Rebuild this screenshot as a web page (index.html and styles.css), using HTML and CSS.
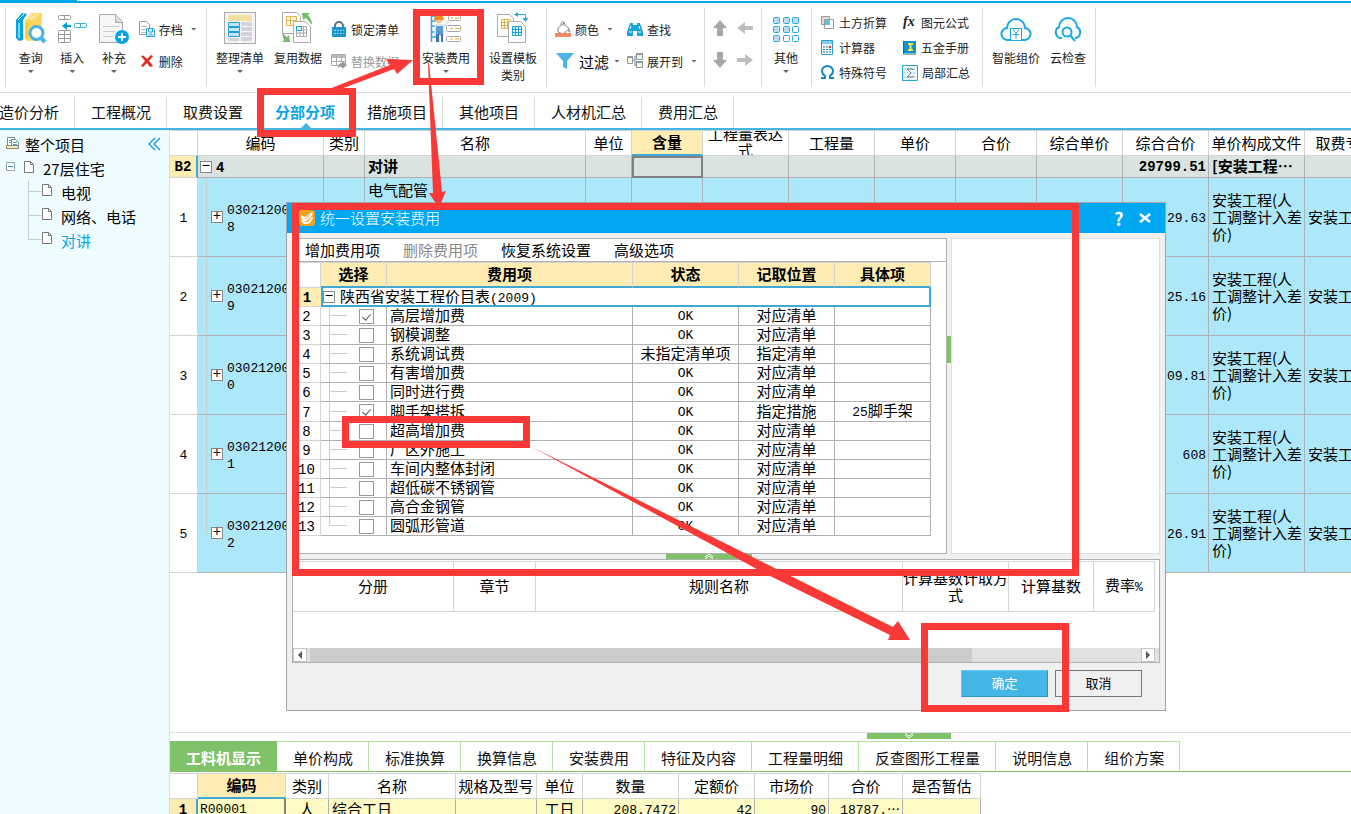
FILE: index.html
```html
<!DOCTYPE html>
<html lang="zh-CN">
<head>
<meta charset="utf-8">
<title>统一设置安装费用</title>
<link rel="stylesheet" href="styles.css">
</head>
<body>
<div class="app">
  <header class="topline"><span class="topline-tab"></span></header>

  <div class="ribbon">
    <div class="group g-edit">
      <button class="big w42"><svg width="32" height="32" viewBox="0 0 32 32"><path d="M1 8l6-7 5 1-4 6v20l-4 1-3-3z" fill="#00a3e4"/><path d="M3 8l6-6M4 11v15" stroke="#fff" fill="none"/><path d="M10 8l6-7h11l-1 27-14 1-2-3z" fill="#ffd75e"/><path d="M12 8l5-6M15 8l5-6M18 8l5-6" stroke="#fff" fill="none"/><path d="M12 10v17" stroke="#e9b93c"/><circle cx="21.500" cy="21" r="6.500" fill="#fff" stroke="#4ab4e6" stroke-width="3"/><path d="M26 26l4 4" stroke="#4ab4e6" stroke-width="4"/></svg><span>查询</span><i class="caret"></i></button>
      <button class="big w42"><svg width="32" height="32" viewBox="0 0 32 32"><g fill="#fff" stroke="#999"><rect x="2.500" y="3.500" width="12" height="4" rx="1"/><path d="M8.500 3v5"/><rect x="2.500" y="18.500" width="12" height="12" rx="1"/><path d="M2 22.500h13M2 26.500h13M8.500 18v13"/></g><path d="M6 14l5-4v3h4v2h-4v3z" fill="#009fdb"/><rect x="18.500" y="11.500" width="12" height="4" rx="1" fill="#fff" stroke="#3bb1e0"/><path d="M24.500 11v5" stroke="#3bb1e0"/></svg><span>插入</span><i class="caret"></i></button>
      <button class="big w42"><svg width="32" height="32" viewBox="0 0 32 32"><path d="M1.500 2.500h16l7 7v21h-23z" fill="#f6f6f6" stroke="#a8a8a8"/><path d="M17.500 2.500v8h7" fill="#ddd" stroke="#a8a8a8"/><path d="M5 14.500h16M5 19.500h12M5 24.500h10" stroke="#ccc"/><circle cx="24" cy="25" r="7" fill="#00a3e8"/><path d="M24 21v8M20 25h8" stroke="#fff" stroke-width="2"/></svg><span>补充</span><i class="caret"></i></button>
      <div class="col2">
        <button class="small"><svg width="16" height="16" viewBox="0 0 16 16"><path d="M.5 .5h7l3 3v10h-10z" fill="#fff" stroke="#999"/><path d="M2 5.500h6M2 8.500h5M2 11.500h5" stroke="#bbb"/><path d="M7.500 7.500h7l1 1v7h-8z" fill="#fff" stroke="#2da3d6"/><path d="M9.500 8v3h4V8M10 15v-2h3v2" stroke="#2da3d6" fill="none"/></svg><span>存档</span><i class="caret"></i></button>
        <button class="small"><svg width="16" height="16" viewBox="0 0 16 16"><path d="M2 3q2-1 3 0l3 3 4-4 2 1-4 5 4 5-3 1-3-4-4 4-2-1 4-5z" fill="#e02a1c"/></svg><span>删除</span></button>
      </div>
    </div>
    <div class="group g-data">
      <button class="big w58"><svg width="32" height="32" viewBox="0 0 32 32"><rect x=".5" y=".5" width="31" height="31" fill="#f4f4f4" stroke="#aaa"/><path d="M4 3h24v6H4z" fill="#f3dfa2"/><g fill="#c8e6f4" stroke="#1ba0d4"><path d="M4.500 10.500h11v4h-11zM4.500 15.500h11v4h-11zM4.500 20.500h11v4h-11z"/></g><path d="M17 10h11v4H17zM17 15h11v4H17zM17 20h11v4H17zM4 26h11v3H4zM17 25h11v4H17z" fill="#d3d3da"/></svg><span>整理清单</span><i class="caret"></i></button>
      <button class="big w58"><svg width="32" height="32" viewBox="0 0 32 32"><path d="M.5 .5h14l4 4v17H.5z" fill="#fff" stroke="#aaa"/><path d="M4.500 4.500h10v9h-10zM4.500 8.500h10M8.500 4v9" stroke="#e5b24c" fill="#fffbe8"/><path d="M11.500 9.500h12l5 5v16h-17z" fill="#fff" stroke="#aaa"/><path d="M14.500 14.500h10v10h-10zM14 18h11M14 21h11M18 14v11M21.500 14v11" stroke="#aaa" fill="none"/><path d="M14.500 14.500h5v4h-5z" fill="#e5f6fd" stroke="#12a2dd"/><path d="M20 1h8l-2 2q4 4 4 10-4-5-6-7l-3 2zM0 18q1 5 5 7l2-2 1 7H0l2-2q-2-4-2-10z" fill="#7ab970"/></svg><span>复用数据</span></button>
      <div class="col2">
        <button class="small"><svg width="16" height="16" viewBox="0 0 16 16"><path d="M4 7V5a4 4 0 0 1 8 0v2" fill="none" stroke="#54768c" stroke-width="2"/><rect x="1" y="6" width="14" height="10" fill="#1c96cf"/><path d="M3 9.500h10M3 12.500h10" stroke="#9bd5ef" stroke-dasharray="2 1"/></svg><span>锁定清单</span></button>
        <button class="small off"><svg width="16" height="16" viewBox="0 0 16 16"><path d="M.5 1.500h14v11h-14z" fill="#fff" stroke="#aaa"/><path d="M1 2h14v3H1z" fill="#bbb"/><path d="M1 8.500h14M5.500 2v11M10.500 2v7" stroke="#aaa"/><path d="M7 15q0-5 4-5V8l5 4-5 4v-2q-2-1-4 1z" fill="#999"/></svg><span>替换数据</span></button>
      </div>
      <button class="big w58 mid"><svg width="32" height="32" viewBox="0 0 32 32"><path d="M2 4h6M2 9h6M2 14h6M2 20h6M2 25h6M1.500 2v28M8.500 20v10" stroke="#2ca9df" stroke-width="1.500"/><g fill="#fff" stroke="#aaa"><rect x="18.500" y="3.500" width="12" height="5" rx="1"/><rect x="16.500" y="13.500" width="14" height="6" rx="1"/><rect x="16.500" y="24.500" width="14" height="5" rx="1"/></g><path d="M20 6h3m2 0h4M20 16.500h3m2 0h4M20 27h3m2 0h4" stroke="#f0a830"/><circle cx="9" cy="8" r="3.500" fill="#f5c499"/><path d="M4 8q0-5 5-5t5 5z" fill="#f48b1d"/><path d="M5 12h9l4-4 1 2-5 6v8H4z" fill="#dfe6ee"/><path d="M6 14h7v9H6z" fill="#5c9bd4"/><path d="M6 22h3v8H6zM11 22h2v8h-2z" fill="#3f74ad"/></svg><span>安装费用</span><i class="caret"></i></button>
    </div>
    <div class="group g-tpl">
      <button class="big w58"><svg width="32" height="32" viewBox="0 0 32 32"><path d="M.5 2.500h12l4 4v18H.5z" fill="#fff" stroke="#aaa"/><path d="M4.500 7.500h9v9h-9zM4.500 10.500h9M4.500 13.500h9M7.500 7v9M10.500 7v9" stroke="#e5b24c" fill="#fffbe8"/><path d="M11.500 9.500h12l5 5v16h-17z" fill="#fff" stroke="#aaa"/><path d="M15.500 14.500h9v9h-9zM15 17.500h10M15 20.500h10M18.500 14v10M21.500 14v10" stroke="#12a2dd" fill="#e5f6fd"/><path d="M20 2.500h8.500v5" stroke="#2fa7d8" fill="none"/><path d="M21 0l-4 2.500L21 5zM25.500 6h6l-3 4z" fill="#2fa7d8"/></svg><span>设置模板<br>类别</span></button>
    </div>
    <div class="group g-find">
      <div class="col2">
        <button class="small"><svg width="16" height="16" viewBox="0 0 16 16"><path d="M3 7l6-5 5 6-6 5-5-2z" fill="#fff" stroke="#888"/><path d="M6 4q0-4 3-3v4" fill="none" stroke="#888"/><path d="M13 6q3 3 2 6-2-1-2-3z" fill="#999"/><path d="M0 12h16v4H0z" fill="#f38a62"/></svg><span>颜色</span><i class="caret"></i></button>
        <button class="small large"><svg width="20" height="18" viewBox="0 0 20 18"><path d="M1 1h18l-7 8v8l-4-2V9z" fill="#4ab4e6"/></svg><span>过滤</span><i class="caret"></i></button>
      </div>
      <div class="col2">
        <button class="small"><svg width="16" height="16" viewBox="0 0 16 16"><path d="M3 2h3v2h4V2h3l3 9v4h-6v-5H6v5H0v-4z" fill="#1aa2da"/><path d="M2 11h3M11 11h3M4 5l-1 3M12 5l1 3" stroke="#fff"/></svg><span>查找</span></button>
        <button class="small"><svg width="16" height="16" viewBox="0 0 16 16"><path d="M5 7h3M8 3v10M8 3h2M8 12h2" stroke="#888" fill="none"/><g fill="#fdf6dd" stroke="#8a9aa2"><path d="M.5 4.500h5v6h-5zM9.500 1.500h6v5h-6zM9.500 9.500h6v5h-6z"/></g><path d="M0 4h6M9 1h7M9 9h7" stroke="#8a9aa2" stroke-width="2"/></svg><span>展开到</span><i class="caret"></i></button>
      </div>
    </div>
    <div class="group g-move">
      <button class="mv" aria-label="上移"><svg width="16" height="16" viewBox="0 0 16 16"><path d="M8 0l7 8h-4v8H5V8H1z" fill="#a6a6a6"/></svg></button>
      <button class="mv" aria-label="左移"><svg width="16" height="16" viewBox="0 0 16 16"><path d="M0 8l8-6v4h8v4H8v4z" fill="#bdbdbd"/></svg></button>
      <button class="mv" aria-label="下移"><svg width="16" height="16" viewBox="0 0 16 16"><path d="M8 16L1 8h4V0h6v8h4z" fill="#a6a6a6"/></svg></button>
      <button class="mv" aria-label="右移"><svg width="16" height="16" viewBox="0 0 16 16"><path d="M16 8L8 2v4H0v4h8v4z" fill="#bdbdbd"/></svg></button>
    </div>
    <div class="group g-other">
      <button class="big w42"><svg width="32" height="32" viewBox="0 0 32 32"><g fill="#fff" stroke="#25a9e0"><rect x="3.500" y="5.500" width="6" height="6" rx="1" fill="#b9dcf0"/><rect x="13.500" y="5.500" width="6" height="6" rx="1" fill="#b9dcf0"/><rect x="22.500" y="5.500" width="6" height="6" rx="1" fill="#b9dcf0"/><rect x="3.500" y="14.500" width="6" height="6" rx="1" fill="#b9dcf0"/><rect x="13.500" y="14.500" width="6" height="6" rx="1" fill="#b9dcf0"/><rect x="22.500" y="14.500" width="6" height="6" rx="1"/><rect x="3.500" y="23.500" width="6" height="6" rx="1" fill="#b9dcf0"/><rect x="13.500" y="23.500" width="6" height="6" rx="1"/><rect x="22.500" y="23.500" width="6" height="6" rx="1"/></g></svg><span>其他</span><i class="caret"></i></button>
    </div>
    <div class="group g-tools">
      <button class="small"><svg width="15" height="15" viewBox="0 0 15 15"><path d="M1.500 1.500h8v8h-8z" fill="#ddd" stroke="#999"/><path d="M4.500 4.500h9v9h-9z" fill="#fff" stroke="#999"/><path d="M5 5h5v5H5z" fill="#5fc1ea"/></svg><span>土方折算</span></button>
      <button class="small"><svg width="15" height="15" viewBox="0 0 15 15"><text x="1" y="11" class="fx">fx</text></svg><span>图元公式</span></button>
      <button class="small"><svg width="15" height="15" viewBox="0 0 15 15"><path d="M1.500 .5h11v14h-11z" fill="#eef9fe" stroke="#2b9fd4"/><path d="M2 1h10v3H2z" fill="#86cdee"/><path d="M3 7h8M3 9.500h8M3 12h8" stroke="#39708c" stroke-dasharray="2 1"/><path d="M9 6h2v2H9z" fill="#e33"/></svg><span>计算器</span></button>
      <button class="small"><svg width="15" height="15" viewBox="0 0 15 15"><path d="M2 1h12v12H2z" fill="#0b94d2"/><path d="M1.500 1v13H14" fill="none" stroke="#0c6fa5"/><path d="M6 4h5M8.500 4v6M6 10h5" stroke="#ffe14a" stroke-width="2"/></svg><span>五金手册</span></button>
      <button class="small"><svg width="15" height="15" viewBox="0 0 15 15"><path d="M1 13h4v-2q-3-2-3-5a5.500 5 0 0 1 11 0q0 3-3 5v2h4" fill="none" stroke="#1887c4" stroke-width="2"/></svg><span>特殊符号</span></button>
      <button class="small"><svg width="16" height="16" viewBox="0 0 16 16"><path d="M.5 .5h15v15H.5z" fill="#eaf7fd" stroke="#28a3da"/><path d="M2 4h12M2 8h12M2 12h12" stroke="#9ccfe5" stroke-dasharray="2 1"/><path d="M11 5V4H5l4 4-4 4h6v-1" fill="none" stroke="#777"/></svg><span>局部汇总</span></button>
    </div>
    <div class="group g-cloud">
      <button class="big w58"><svg width="32" height="32" viewBox="0 0 32 32"><path d="M10 28H8a6 6 0 0 1-1-12 9 9 0 0 1 18 0 6 6 0 0 1-1 12h-2" fill="none" stroke="#19a8e0" stroke-width="2"/><path d="M10.500 16.500h11v12h-11zM13 18l3 3 3-3M16 21v6M13 22.500h6" fill="none" stroke="#19a8e0"/></svg><span>智能组价</span></button>
      <button class="big w46"><svg width="32" height="32" viewBox="0 0 32 32"><path d="M10 26H8a6 6 0 0 1-1-11 9 9 0 0 1 18 0 6 6 0 0 1-1 11h-1" fill="none" stroke="#19a8e0" stroke-width="2"/><circle cx="15" cy="20" r="4.500" fill="none" stroke="#19a8e0" stroke-width="2"/><path d="M18 23l5 6" stroke="#19a8e0" stroke-width="2"/></svg><span>云检查</span></button>
    </div>
  </div>

  <nav class="tabs">
    <button>造价分析</button><button>工程概况</button><button>取费设置</button><button class="on">分部分项</button><button>措施项目</button><button>其他项目</button><button>人材机汇总</button><button>费用汇总</button>
  </nav>

  <div class="work">
    <aside class="tree">
      <div class="node"><svg width="14" height="14" viewBox="0 0 14 14"><path d="M1.500 .5h7v10h-7z" fill="#fff" stroke="#7b8b92"/><path d="M3 3.500h5M3 5.500h5" stroke="#3aa6d8"/><path d="M5.500 2.500h4l3 3v5h-7z" fill="#fff" stroke="#7b8b92"/><path d="M7 5.500h4M7 7.500h4" stroke="#3aa6d8"/><path d="M.5 8.500h12v3H.5z" fill="#f5ecc0" stroke="#8b8b7b"/></svg><span>整个项目</span>
        <button class="fold" aria-label="收起"><svg width="14" height="14" viewBox="0 0 14 14"><path d="M7 1L1 7l6 6M12 1L6 7l6 6" fill="none" stroke="#1c9fd8" stroke-width="1.500"/></svg></button></div>
      <div class="node"><svg width="32" height="14" viewBox="0 0 32 14"><path d="M.5 1.500h8v8h-8z" fill="#fff" stroke="#8aa5b0"/><path d="M2 5.500h5" stroke="#1c9fd8"/><path d="M18.500 .5h6l3 3v8h-9z" fill="#fff" stroke="#777"/><path d="M24.500 .5v3h3" fill="none" stroke="#777"/></svg><span>27层住宅</span></div>
      <div class="node leaf"><svg width="32" height="24" viewBox="0 0 32 24"><path d="M.5 0v24M1 11.500h12" stroke="#c8cfd2"/><path d="M14.500 4.500h6l3 3v8h-9z" fill="#fff" stroke="#777"/><path d="M20.500 4.500v3h3" fill="none" stroke="#777"/></svg><span>电视</span></div>
      <div class="node leaf"><svg width="32" height="24" viewBox="0 0 32 24"><path d="M.5 0v24M1 11.500h12" stroke="#c8cfd2"/><path d="M14.500 4.500h6l3 3v8h-9z" fill="#fff" stroke="#777"/><path d="M20.500 4.500v3h3" fill="none" stroke="#777"/></svg><span>网络、电话</span></div>
      <div class="node leaf sel"><svg width="32" height="24" viewBox="0 0 32 24"><path d="M.5 0v11M0 11.500h13" stroke="#c8cfd2"/><path d="M14.500 4.500h6l3 3v8h-9z" fill="#fff" stroke="#777"/><path d="M20.500 4.500v3h3" fill="none" stroke="#777"/></svg><span>对讲</span></div>
    </aside>

    <main class="main">
      <div class="upper">
        <table class="grid bill">
          <colgroup><col class="c28"><col class="c126"><col class="c41"><col class="c221"><col class="c46"><col class="c71"><col class="c86"><col class="c86"><col class="c81"><col class="c81"><col class="c86"><col class="c86"><col class="c96"><col class="c82"></colgroup>
          <thead><tr><th></th><th>编码</th><th>类别</th><th>名称</th><th>单位</th><th class="hot">含量</th><th><div class="clip">工程量表达式</div></th><th>工程量</th><th>单价</th><th>合价</th><th>综合单价</th><th>综合合价</th><th>单价构成文件</th><th>取费专业</th></tr></thead>
          <tbody>
            <tr class="sum"><th class="num">B2</th><td><div class="code root"><i class="exp">−</i><span class="num">4</span></div></td><td></td><td>对讲</td><td></td><td class="cur"></td><td></td><td></td><td></td><td></td><td></td><td class="num r">29799.51</td><td>[安装工程⋯</td><td></td></tr>
            <tr class="item"><th class="num">1</th><td><div class="code"><i class="exp">+</i><span class="num">03021200<br>8</span></div></td><td></td><td class="top">电气配管</td><td></td><td></td><td></td><td></td><td></td><td></td><td></td><td class="num r">29.63</td><td>安装工程(人工调整计入差价)</td><td class="cut">安装工程</td></tr>
            <tr class="item"><th class="num">2</th><td><div class="code"><i class="exp">+</i><span class="num">03021200<br>9</span></div></td><td></td><td></td><td></td><td></td><td></td><td></td><td></td><td></td><td></td><td class="num r">25.16</td><td>安装工程(人工调整计入差价)</td><td class="cut">安装工程</td></tr>
            <tr class="item"><th class="num">3</th><td><div class="code"><i class="exp">+</i><span class="num">03021200<br>0</span></div></td><td></td><td></td><td></td><td></td><td></td><td></td><td></td><td></td><td></td><td class="num r">09.81</td><td>安装工程(人工调整计入差价)</td><td class="cut">安装工程</td></tr>
            <tr class="item"><th class="num">4</th><td><div class="code"><i class="exp">+</i><span class="num">03021200<br>1</span></div></td><td></td><td></td><td></td><td></td><td></td><td></td><td></td><td></td><td></td><td class="num r">608</td><td>安装工程(人工调整计入差价)</td><td class="cut">安装工程</td></tr>
            <tr class="item"><th class="num">5</th><td><div class="code last"><i class="exp">+</i><span class="num">03021200<br>2</span></div></td><td></td><td></td><td></td><td></td><td></td><td></td><td></td><td></td><td></td><td class="num r">26.91</td><td>安装工程(人工调整计入差价)</td><td class="cut">安装工程</td></tr>
          </tbody>
        </table>
      </div>
      <section class="lower">
        <div class="grip"><svg width="10" height="6" viewBox="0 0 10 6"><path d="M1 0l4 3 4-3M1 2l4 3 4-3" fill="none" stroke="#fff"/></svg></div>
        <nav class="subtabs">
          <button class="on">工料机显示</button><button>单价构成</button><button>标准换算</button><button>换算信息</button><button>安装费用</button><button>特征及内容</button><button>工程量明细</button><button>反查图形工程量</button><button>说明信息</button><button>组价方案</button>
        </nav>
        <table class="grid res">
          <colgroup><col class="c28"><col class="c88"><col class="c43"><col class="c127"><col class="c81"><col class="c46"><col class="c96"><col class="c76"><col class="c74"><col class="c74"><col class="c78"></colgroup>
          <thead><tr><th></th><th class="hot">编码</th><th>类别</th><th>名称</th><th>规格及型号</th><th>单位</th><th>数量</th><th>定额价</th><th>市场价</th><th>合价</th><th>是否暂估</th></tr></thead>
          <tbody><tr><th class="num">1</th><td class="num sel">R00001</td><td class="c">人</td><td>综合工日</td><td></td><td class="c">工日</td><td class="num r">208.7472</td><td class="num r">42</td><td class="num r">90</td><td class="num r">18787.⋯</td><td></td></tr></tbody>
        </table>
      </section>
    </main>
  </div>
</div>

<section class="dialog" role="dialog" aria-labelledby="dlg-title">
  <header class="title">
    <svg width="16" height="16" viewBox="0 0 16 16"><rect width="16" height="16" rx="3" fill="#f5a01e"/><path d="M2 5l4 2 7-5 1 2-5 6-4 2-1-2-2-2z" fill="#fff"/><path d="M3 10q1 4 5 3t5-6" fill="none" stroke="#fff" stroke-width="2"/><path d="M6 9l5-4" stroke="#f5a01e"/></svg>
    <h1 id="dlg-title">统一设置安装费用</h1>
    <button class="help" aria-label="帮助">?</button>
    <button class="close" aria-label="关闭"><svg width="12" height="12" viewBox="0 0 12 12"><path d="M1 2l10 8M11 2L1 10" stroke="#fff" stroke-width="2.500"/></svg></button>
  </header>
  <div class="body">
    <div class="panes">
      <div class="left">
        <div class="cmds"><button>增加费用项</button><button disabled>删除费用项</button><button>恢复系统设置</button><button>高级选项</button></div>
        <table class="grid fee">
          <colgroup><col class="c28"><col class="c66"><col class="c246"><col class="c106"><col class="c96"><col class="c96"></colgroup>
          <thead><tr><th></th><th>选择</th><th>费用项</th><th>状态</th><th>记取位置</th><th>具体项</th></tr></thead>
          <tbody>
            <tr class="first"><th class="num">1</th><td colspan="5"><div class="pick"><i class="exp">−</i><span>陕西省安装工程价目表<span class="num">(2009)</span></span></div></td></tr>
            <tr><th class="num">2</th><td><div class="pick"><i class="branch"></i><input type="checkbox" aria-label="高层增加费" checked></div></td><td>高层增加费</td><td class="num c">OK</td><td class="c">对应清单</td><td></td></tr>
            <tr><th class="num">3</th><td><div class="pick"><i class="branch"></i><input type="checkbox" aria-label="钢模调整"></div></td><td>钢模调整</td><td class="num c">OK</td><td class="c">对应清单</td><td></td></tr>
            <tr><th class="num">4</th><td><div class="pick"><i class="branch"></i><input type="checkbox" aria-label="系统调试费"></div></td><td>系统调试费</td><td class="c">未指定清单项</td><td class="c">指定清单</td><td></td></tr>
            <tr><th class="num">5</th><td><div class="pick"><i class="branch"></i><input type="checkbox" aria-label="有害增加费"></div></td><td>有害增加费</td><td class="num c">OK</td><td class="c">对应清单</td><td></td></tr>
            <tr><th class="num">6</th><td><div class="pick"><i class="branch"></i><input type="checkbox" aria-label="同时进行费"></div></td><td>同时进行费</td><td class="num c">OK</td><td class="c">对应清单</td><td></td></tr>
            <tr><th class="num">7</th><td><div class="pick"><i class="branch"></i><input type="checkbox" aria-label="脚手架搭拆" checked></div></td><td>脚手架搭拆</td><td class="num c">OK</td><td class="c">指定措施</td><td class="c"><span class="num">25</span>脚手架</td></tr>
            <tr><th class="num">8</th><td><div class="pick"><i class="branch"></i><input type="checkbox" aria-label="超高增加费"></div></td><td>超高增加费</td><td class="num c">OK</td><td class="c">对应清单</td><td></td></tr>
            <tr><th class="num">9</th><td><div class="pick"><i class="branch"></i><input type="checkbox" aria-label="厂区外施工"></div></td><td>厂区外施工</td><td class="num c">OK</td><td class="c">对应清单</td><td></td></tr>
            <tr><th class="num">10</th><td><div class="pick"><i class="branch"></i><input type="checkbox" aria-label="车间内整体封闭"></div></td><td>车间内整体封闭</td><td class="num c">OK</td><td class="c">对应清单</td><td></td></tr>
            <tr><th class="num">11</th><td><div class="pick"><i class="branch"></i><input type="checkbox" aria-label="超低碳不锈钢管"></div></td><td>超低碳不锈钢管</td><td class="num c">OK</td><td class="c">对应清单</td><td></td></tr>
            <tr><th class="num">12</th><td><div class="pick"><i class="branch"></i><input type="checkbox" aria-label="高合金钢管"></div></td><td>高合金钢管</td><td class="num c">OK</td><td class="c">对应清单</td><td></td></tr>
            <tr><th class="num">13</th><td><div class="pick"><i class="branch end"></i><input type="checkbox" aria-label="圆弧形管道"></div></td><td>圆弧形管道</td><td class="num c">OK</td><td class="c">对应清单</td><td></td></tr>
          </tbody>
        </table>
      </div>
      <div class="vsplit"><span class="vgrip"></span></div>
      <div class="right"></div>
    </div>
    <div class="hsplit"><span class="hgrip"><svg width="10" height="5" viewBox="0 0 10 5"><path d="M1 3l4-3 4 3M1 5l4-3 4 3" fill="none" stroke="#fff"/></svg></span></div>
    <div class="rules">
      <table class="grid rule">
        <colgroup><col class="c161"><col class="c82"><col class="c367"><col class="c106"><col class="c85"><col class="c61"></colgroup>
        <thead><tr><th>分册</th><th>章节</th><th>规则名称</th><th>计算基数计取方式</th><th>计算基数</th><th>费率<span class="num">%</span></th></tr></thead>
      </table>
      <div class="hbar"><button aria-label="向左滚动"><svg width="6" height="8" viewBox="0 0 6 8"><path d="M5 0v8L1 4z" fill="#555"/></svg></button><span class="track"><span class="thumb"></span></span><button aria-label="向右滚动"><svg width="6" height="8" viewBox="0 0 6 8"><path d="M1 0v8l4-4z" fill="#555"/></svg></button></div>
    </div>
    <footer class="actions"><button class="ok">确定</button><button class="cancel">取消</button></footer>
  </div>
</section>

<svg class="marks" aria-hidden="true">
  <g fill="none" stroke="#fb3838" stroke-width="7">
    <rect x="416.500" y="12.500" width="64" height="69"/>
    <rect x="260.500" y="91.500" width="92" height="42"/>
    <rect x="295.500" y="206.500" width="780" height="366"/>
    <rect x="345.500" y="419.500" width="181" height="25"/>
    <rect x="924.500" y="626.500" width="141" height="82"/>
  </g>
  <g fill="#fb3838">
    <path d="M329 89h12l53-20 3 5 16-14-27-1 4 6z"/>
    <path d="M428 63l1 0 13 129 4-1-7 17-10-15 4 0z"/>
    <path d="M532 447L893 627l5-6 12 19-22 0 2-5L766 574z"/>
  </g>
</svg>
</body>
</html>
```
FILE: styles.css
```css
* { box-sizing: border-box; }
body {
  margin: 0;
  height: 100vh;
  overflow: hidden;
  background: #fff;
  color: #000;
  font: 15px/17px "Noto Sans CJK SC", sans-serif;
}
button { margin: 0; padding: 0; border: 0; background: none; color: inherit; font: inherit; white-space: nowrap; }
svg { flex: none; display: block; }
i { font-style: normal; }
.num { font-family: "Liberation Mono", "Noto Sans CJK SC", monospace; font-size: 13px; }

.app { height: 100%; display: flex; flex-direction: column; }
.topline { flex: none; height: 3px; border-bottom: 2px solid #00a8e8; }
.topline-tab { display: block; width: 77px; height: 1px; background: #00a8e8; }

/* ribbon */
.ribbon { flex: none; display: flex; padding: 5px 0; height: 90px; border-bottom: 1px solid #dcdcdc; font-size: 12px; color: #222; }
.group { flex: none; display: flex; border-left: 1px solid #dcdcdc; padding-left: 4px; }
.g-edit { margin-left: 5px; width: 201px; }
.g-data { width: 273px; }
.g-tpl { width: 67px; }
.g-find { width: 158px; padding-left: 8px; }
.g-move { width: 57px; padding-top: 4px; display: grid; grid-template-columns: 22px 28px; grid-template-rows: 32px 32px; }
.g-other { width: 50px; padding-left: 3px; }
.g-tools { width: 171px; padding: 2px 0 0 8px; display: grid; grid-template-columns: 82px 80px; grid-template-rows: 25px 25px 25px; }
.g-cloud { width: 114px; border-right: 1px solid #dcdcdc; }
.big { display: flex; flex-direction: column; align-items: center; padding-top: 4px; line-height: 17px; }
.big span { margin-top: 5px; }
.w42 { width: 42px; }
.w46 { width: 46px; }
.w58 { width: 58px; }
.mid { margin-left: 18px; }
.caret { width: 6px; height: 3px; background: #666; clip-path: polygon(0 0, 100% 0, 50% 100%); }
.big .caret { margin-top: 4px; }
.col2 { display: grid; grid-template-rows: 32px 32px; padding: 5px 0 0 4px; width: 72px; }
.g-find .col2 { padding-left: 0; }
.small { display: flex; align-items: center; gap: 4px; }
.small .caret { margin-left: 4px; }
.large { font-size: 15px; color: #000; }
.large .caret { margin-left: 1px; }
.off { color: #999; }
.mv { display: flex; align-items: center; justify-content: center; }
.fx { font: italic bold 14px "Liberation Serif", serif; fill: #222; }

/* top tabs */
.tabs { flex: none; display: flex; height: 37px; padding-top: 4px; margin-left: -17px; border-bottom: 2px solid #43b7e4; }
.tabs button { padding: 0 15px 2px 16px; border-right: 1px solid #dcdcdc; color: #111; }
.tabs .on { position: relative; color: #0aa5e6; font-weight: bold; }
.tabs .on::after { content: ""; position: absolute; left: 42px; bottom: 0; width: 10px; height: 5px; background: #43b7e4; clip-path: polygon(50% 0, 100% 100%, 0 100%); }

/* work area */
.work { flex: 1; min-height: 0; display: flex; }
.tree { flex: none; width: 170px; padding-top: 2px; background: #effcff; border-right: 1px solid #dcdcdc; }
.node { display: flex; align-items: center; height: 24px; padding-left: 6px; }
.node span { margin-left: 5px; }
.node.leaf { padding-left: 28px; }
.node.leaf span { margin-left: 1px; }
.node.sel span { color: #0aa5e6; }
.fold { margin: 0 7px 0 auto; }
.main { flex: 1; min-width: 0; display: flex; flex-direction: column; }
.upper { flex: 1; min-height: 0; overflow: hidden; }

/* grids */
.grid { table-layout: fixed; border-collapse: separate; border-spacing: 0; width: 0; }
.grid th, .grid td { padding: 0 0 2px; border: 0 solid #b0b0b0; border-width: 0 1px 1px 0; overflow: hidden; }
.grid th { font-weight: normal; border-color: #d4d4d4; }
.grid td { padding-left: 3px; text-align: left; }
.grid .c, .grid .r { padding-left: 2px; padding-right: 2px; }
.grid .c { text-align: center; }
.grid .r { text-align: right; }
.grid th.num, .grid td.num { padding-top: 2px; padding-bottom: 0; }
.c28 { width: 28px; } .c41 { width: 41px; } .c43 { width: 43px; } .c46 { width: 46px; }
.c61 { width: 61px; } .c66 { width: 66px; } .c71 { width: 71px; } .c74 { width: 74px; }
.c76 { width: 76px; } .c78 { width: 78px; } .c81 { width: 81px; } .c82 { width: 82px; }
.c85 { width: 85px; } .c86 { width: 86px; } .c88 { width: 88px; } .c96 { width: 96px; }
.c106 { width: 106px; } .c126 { width: 126px; } .c127 { width: 127px; } .c161 { width: 161px; }
.c221 { width: 221px; } .c246 { width: 246px; } .c367 { width: 367px; }
.grid thead th { height: 26px; border-top-width: 1px; white-space: nowrap; }
.grid .hot { background: #ffecb3; border-bottom: 2px solid #3fa9d6; font-weight: bold; }
.grid .clip { height: 22px; display: flex; align-items: center; white-space: normal; line-height: 16px; padding: 0 4px; }
.exp { flex: none; width: 12px; height: 12px; border: 1px solid #888; background: #fff; font: 14px/9px "Liberation Mono", monospace; text-align: center; }

.bill .sum th, .bill .sum td { height: 22px; background: #d9e3df; font-weight: bold; }
.bill .sum th { background: #ffecb3; border-right: 2px solid #3fa9d6; }
.bill .sum .num, .bill .sum th { font-size: 14px; }
.bill .sum .cur { border: 2px solid #808080; }
.bill .item th, .bill .item td { height: 79px; }
.bill .item td { background: #ade8fa; }
.bill .item .cut { white-space: nowrap; }
.bill .item .top { vertical-align: top; padding-top: 3px; }
.grid td:nth-child(2) { padding: 0; }
.code { display: flex; align-items: center; gap: 4px; height: 78px; padding-left: 13px; background: linear-gradient(#ccc, #ccc) 8px 0 / 1px 100% no-repeat, linear-gradient(#ccc, #ccc) 8px 50% / 6px 1px no-repeat; }
.code .num { padding-top: 3px; }
.code.last { background-size: 1px 50%, 6px 1px; }
.code.root { height: 21px; padding-left: 2px; background: none; }

/* resource pane */
.lower { position: relative; flex: 0 0 82px; overflow: hidden; border-top: 1px solid #dedede; padding-top: 8px; }
.grip { position: absolute; top: 0; left: 59%; width: 84px; height: 6px; background: #80c26a; display: flex; justify-content: center; }
.subtabs { display: flex; height: 31px; border-bottom: 1px solid #80c26a; }
.subtabs button { padding: 1px 15px 0 16px; border: solid #b4e2a0; border-width: 1px 1px 0 0; color: #111; }
.subtabs .on { background: #80c26a; border-color: #80c26a; color: #fff; font-weight: bold; }
.res { margin-top: 1px; }
.res tbody th, .res tbody td { height: 22px; background: #fdfac4; }
.res tbody th { background: #ffecb3; font-weight: bold; font-size: 14px; border-right: 2px solid #3fa9d6; }
.res tbody .sel { border-right: 2px solid #808080; padding-left: 2px; }

/* dialog */
.dialog { position: absolute; left: 286px; top: 202px; width: 880px; border: 1px solid #a0a4a8; background: #f0f0f0; }
.title { display: flex; align-items: center; height: 30px; padding: 0 14px 0 12px; background: #00a8f2; color: #fff; }
.title h1 { flex: 1; margin: 0 0 0 5px; padding-bottom: 2px; font-size: 15px; line-height: 17px; font-weight: 300; }
.help { width: 12px; font-size: 18px; font-weight: bold; }
.close { margin-left: 14px; }
.body { padding: 5px; }
.panes { display: flex; min-height: 316px; }
.left { flex: 1 1 655px; min-width: 0; background: #fff; border: 1px solid #b0b0b0; }
.cmds { display: flex; gap: 23px; height: 23px; padding: 0 0 2px 12px; border-bottom: 1px solid #b0b0b0; color: #000; }
.cmds button:disabled { color: #888; }
.vsplit { flex: none; width: 4px; display: flex; padding-top: 98px; }
.vgrip { width: 4px; height: 27px; background: #80c26a; }
.right { flex: 0 1 209px; background: #fff; border: 1px solid #dedede; }
.fee thead th { background: #ffecb3; border-bottom: 2px solid #3fa9d6; font-weight: bold; }
.fee thead th:first-child { background: #fff; border-bottom: 1px solid #d4d4d4; }
.fee tbody th, .fee tbody td { height: 19px; line-height: 16px; white-space: nowrap; }
.fee span.num { line-height: 12px; }
.fee tbody th.num { font-size: 14px; }
.fee .first th { background: #ffecb3; font-weight: bold; border-right: 0; }
.fee .first td { border: 2px solid #3fa9d6; border-top: 0; }
.pick { display: flex; align-items: center; height: 18px; }
.first .pick { height: 17px; gap: 5px; }
.branch { width: 18px; height: 18px; margin: 0 12px 0 8px; background: linear-gradient(#ccc, #ccc) 0 0 / 1px 100% no-repeat, linear-gradient(#ccc, #ccc) 0 8px / 18px 1px no-repeat; }
.branch.end { background-size: 1px 8px, 18px 1px; }
.pick input { appearance: none; margin: 0; width: 15px; height: 15px; border: 1px solid #999; background: #fff; display: flex; justify-content: center; }
.pick input:checked::after { content: ""; width: 4px; height: 7px; margin-top: 2px; border: solid #555; border-width: 0 1px 1px 0; transform: rotate(40deg); }
.hsplit { height: 5px; display: flex; padding-left: 374px; }
.hgrip { width: 86px; background: #80c26a; display: flex; justify-content: center; }
.rules { border: 1px solid #b0b0b0; background: #fff; padding-top: 1px; min-height: 104px; display: flex; flex-direction: column; justify-content: space-between; }
.rule thead th { height: 51px; white-space: normal; }
.hbar { display: flex; height: 14px; padding-right: 4px; background: #e1e1e1; }
.hbar button { width: 14px; display: flex; align-items: center; justify-content: center; background: #fff; border: 1px solid #c4c4c4; }
.track { flex: 1; padding: 0 3px; }
.thumb { display: block; width: 80%; height: 14px; background: #cbcbcb; }
.actions { display: flex; justify-content: flex-end; gap: 7px; padding: 7px 18px 8px 0; }
.actions button { width: 87px; height: 27px; padding-bottom: 2px; font-size: 13px; border: 1px solid #777; }
.actions .ok { background: #44b6e6; border-color: #5fcbf8 #2a98c8 #2a98c8 #5fcbf8; color: #fff; }

/* callouts drawn over the window */
.marks { position: absolute; left: 0; top: 0; width: 100%; height: 100%; pointer-events: none; }
```
